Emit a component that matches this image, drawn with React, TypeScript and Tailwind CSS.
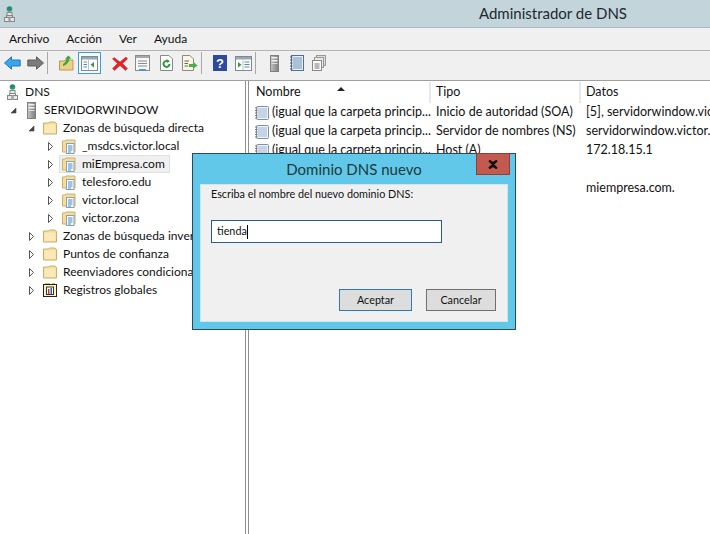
const ui = { fontFamily: 'Lato, "Open Sans", sans-serif' };

const Globe: React.FC = () => (
    <svg width="12" height="16" viewBox="0 0 12 16" className="shrink-0">
        <circle cx="5.5" cy="3" r="2.8" fill="#2c9a5a" />
        <path d="M3.5 2 L5.5 0.6 L7 2 L5 3.5 Z" fill="#2b6fc4" />
        <path d="M5.5 6 V9.5 M2.5 11 V9.5 H8.5 V11" stroke="#777" fill="none" />
        <rect x="3" y="6.5" width="5" height="3" fill="#e6e6e6" stroke="#888" />
        <rect x="0.5" y="11.5" width="4.5" height="4" fill="#e6e6e6" stroke="#888" />
        <rect x="6" y="11.5" width="4.5" height="4" fill="#e6e6e6" stroke="#888" />
    </svg>
);

const Server: React.FC = () => (
    <svg width="13" height="17" viewBox="-2 0 13 17" className="shrink-0">
        <defs>
            <linearGradient id="srv" x1="0" x2="1" y1="0" y2="0">
                <stop offset="0" stopColor="#c4c4c4" />
                <stop offset="1" stopColor="#7d7d7d" />
            </linearGradient>
        </defs>
        <rect x="0.5" y="0.5" width="8" height="16" fill="url(#srv)" stroke="#808080" />
        <rect x="1.5" y="2" width="6" height="1.5" fill="#f0f0f0" />
        <rect x="1.5" y="5" width="6" height="1.5" fill="#f0f0f0" />
        <rect x="1.5" y="8" width="6" height="1" fill="#dcdcdc" />
    </svg>
);

const Folder: React.FC = () => (
    <svg width="14" height="14" viewBox="0 0 14 14" className="shrink-0">
        <path d="M0.5 13 V2 H5.5 L6.5 1 H12 L13.5 2.5 V13 Z" fill="#f6dd97" stroke="#c9b070" />
        <rect x="1.5" y="3.5" width="11" height="8.5" fill="#fbeab8" />
    </svg>
);

const ZoneFolder: React.FC = () => (
    <svg width="14" height="15" viewBox="0 0 14 15" className="shrink-0">
        <path d="M0.5 13 V2 H3 L4 1 H13 V13 Z" fill="#f6dd97" stroke="#c9b070" />
        <rect x="4.5" y="4.5" width="7.5" height="10" fill="#fff" stroke="#8aa0b8" />
        <path d="M6 7 H10.5 M6 9 H10.5 M6 11 H10.5 M6 13 H9" stroke="#3f86c9" />
    </svg>
);

const GlobalLog: React.FC = () => (
    <svg width="14" height="14" viewBox="0 0 14 14" className="shrink-0">
        <rect x="0.5" y="1.5" width="13" height="12" fill="#fdf3c0" stroke="#222" />
        <path d="M2 0.5 H7 M9 0.5 H12" stroke="#d9b84a" />
        <rect x="3.5" y="4" width="7" height="7.5" fill="#fff" stroke="#333" />
        <rect x="5" y="6" width="1.5" height="5" fill="#c33" />
        <rect x="7.5" y="5" width="1.5" height="6" fill="#2b5fbd" />
    </svg>
);

const RecordIcon: React.FC = () => (
    <svg width="14" height="14" viewBox="0 0 14 14" className="shrink-0">
        <rect x="1.5" y="0.5" width="12" height="13" rx="1" fill="#eef3f9" stroke="#7f8fa3" />
        <path d="M3 3 H12 M3 5 H12 M3 7 H12 M3 9 H12 M3 11 H12" stroke="#9db5cf" />
        <path d="M0 2 H2.5 M0 4.5 H2.5 M0 7 H2.5 M0 9.5 H2.5 M0 12 H2.5" stroke="#777" />
    </svg>
);

const Arrow: React.FC<{ open?: boolean }> = ({ open }) => (
    <svg width="7" height="9" viewBox="0 0 7 9" className="shrink-0">
        {open ? <path d="M6 2 V7 H1 Z" fill="#444" stroke="#444" strokeWidth="0.6" /> : <path d="M1.5 0.5 L5.5 4.5 L1.5 8.5 Z" fill="#fff" stroke="#555" />}
    </svg>
);

const ToolBtn: React.FC<{ w: number; active?: boolean; children: React.ReactNode }> = ({ w, active, children }) => (
    <div style={{ width: w }} className={`h-[22px] flex items-center justify-center shrink-0 ${active ? "border border-[#3c9ee0] bg-[#f7fbfe]" : ""}`}>
        {children}
    </div>
);

const Sep: React.FC = () => <div className="w-px h-[22px] bg-[#a8a8a8] shrink-0" />;

const WinIcon: React.FC<{ flip?: boolean }> = ({ flip }) => (
    <svg width="17" height="15" viewBox="0 0 17 15">
        <rect x="0.5" y="0.5" width="16" height="14" fill="#fff" stroke="#7a8a99" />
        <rect x="1" y="1" width="15" height="2.5" fill="#9aa7b3" />
        {flip ? (
            <>
                <path d="M3 6 L6.5 8.8 L3 11.6 Z" fill="#2f9a3a" />
                <path d="M9.5 6 H14.5 M9.5 8.5 H14.5 M9.5 11 H14.5" stroke="#5c87b5" />
                <path d="M8 4 V14" stroke="#b8c2cc" />
            </>
        ) : (
            <>
                <path d="M2.5 6 H6 M2.5 8.5 H6 M2.5 11 H6" stroke="#5c87b5" />
                <path d="M7.5 4 V14" stroke="#b8c2cc" />
                <path d="M13 6 L9.5 8.8 L13 11.6 Z" fill="#2f9a3a" />
            </>
        )}
    </svg>
);

const Toolbar: React.FC = () => (
    <div className="h-[29px] flex items-start pt-[1px] pl-[2px] bg-[#f0f0f0]">
        <ToolBtn w={21}>
            <svg width="17" height="14" viewBox="0 0 17 14">
                <path d="M0.5 7 L7.5 0.8 V4 H16.2 V10 H7.5 V13.2 Z" fill="#3aa5ea" stroke="#1f78c0" />
            </svg>
        </ToolBtn>
        <ToolBtn w={24}>
            <svg width="17" height="14" viewBox="0 0 17 14">
                <path d="M16.5 7 L9.5 0.8 V4 H0.8 V10 H9.5 V13.2 Z" fill="#7b7b7b" stroke="#5f5f5f" />
            </svg>
        </ToolBtn>
        <Sep />
        <div className="w-[8px] shrink-0" />
        <ToolBtn w={20}>
            <svg width="15" height="16" viewBox="0 0 15 16">
                <path d="M0.5 15 V6 H5 L6 5 H14 V15 Z" fill="#ecd08a" stroke="#b99a55" />
                <path d="M4 9 C6 8 7 6 7.5 3.5 L6 3.5 L9.5 0.5 L12.5 3.5 L10.5 3.5 C10 7 8 10 4 11 Z" fill="#3ea83e" />
            </svg>
        </ToolBtn>
        <div className="w-[2px] shrink-0" />
        <ToolBtn w={23} active>
            <WinIcon />
        </ToolBtn>
        <div className="w-[7px] shrink-0" />
        <ToolBtn w={24}>
            <svg width="16" height="15" viewBox="0 0 16 15">
                <path d="M2 1.5 L8 6 L14 1 L15.5 3 L10.5 7.5 L15.5 12.5 L13.5 14.5 L8 9.5 L2.5 14.5 L0.5 12.5 L5.5 7.5 L0.5 3 Z" fill="#e0242b" stroke="#b81c20" strokeWidth="0.5" />
            </svg>
        </ToolBtn>
        <ToolBtn w={21}>
            <svg width="15" height="16" viewBox="0 0 15 16">
                <rect x="0.5" y="0.5" width="14" height="15" fill="#f7f7f7" stroke="#8a8a8a" />
                <rect x="1" y="1" width="13" height="2" fill="#a8a8a8" />
                <path d="M3 6 H12 M3 8.5 H12 M3 11 H12" stroke="#8a8a8a" />
                <rect x="4" y="14" width="7" height="1.5" fill="#3c9ee0" />
            </svg>
        </ToolBtn>
        <ToolBtn w={27}>
            <svg width="13" height="16" viewBox="0 0 13 16">
                <path d="M0.5 0.5 H9 L12.5 4 V15.5 H0.5 Z" fill="#fff" stroke="#8a8a8a" />
                <path d="M9.5 9 A3 3 0 1 1 8 6.3" fill="none" stroke="#2f9a3a" strokeWidth="2" />
                <path d="M6.5 4 L10 6.3 L7 8 Z" fill="#2f9a3a" />
            </svg>
        </ToolBtn>
        <ToolBtn w={19}>
            <svg width="16" height="16" viewBox="0 0 16 16">
                <path d="M0.5 0.5 H8 L11.5 4 V15.5 H0.5 Z" fill="#fbf6dd" stroke="#8a8a8a" />
                <path d="M2.5 6 H7 M2.5 8.5 H6 M2.5 11 H6" stroke="#666" />
                <path d="M7 9 H11 V6.5 L15.5 10.5 L11 14 V12 H7 Z" fill="#49b04a" />
            </svg>
        </ToolBtn>
        <div className="w-[2px] shrink-0" />
        <Sep />
        <div className="w-[6px] shrink-0" />
        <ToolBtn w={23}>
            <svg width="14" height="16" viewBox="0 0 14 16">
                <rect width="14" height="16" fill="#2c4a9e" />
                <text x="7" y="13" textAnchor="middle" fontSize="13" fontWeight="700" fill="#fff" fontFamily="Liberation Sans">?</text>
            </svg>
        </ToolBtn>
        <ToolBtn w={24}>
            <WinIcon flip />
        </ToolBtn>
        <Sep />
        <div className="w-[7px] shrink-0" />
        <ToolBtn w={22}>
            <Server />
        </ToolBtn>
        <ToolBtn w={24}>
            <svg width="14" height="16" viewBox="0 0 14 16">
                <rect x="1.5" y="0.5" width="12" height="15" fill="#e8f0f8" stroke="#4f6ea8" />
                <path d="M3 3 H12 M3 5 H12 M3 7 H12 M3 9 H12 M3 11 H12 M3 13 H12" stroke="#6d92c0" />
                <path d="M0 2 H2.5 M0 5 H2.5 M0 8 H2.5 M0 11 H2.5 M0 14 H2.5" stroke="#555" />
            </svg>
        </ToolBtn>
        <ToolBtn w={20}>
            <svg width="14" height="16" viewBox="0 0 14 16">
                <rect x="4.5" y="0.5" width="9" height="10" fill="#ddd" stroke="#999" />
                <rect x="2.5" y="2.5" width="9" height="10" fill="#e8e8e8" stroke="#999" />
                <rect x="0.5" y="5.5" width="9" height="10" fill="#fafafa" stroke="#888" />
                <path d="M2.5 9 H7.5 M2.5 11 H7.5 M2.5 13 H7.5" stroke="#777" />
            </svg>
        </ToolBtn>
    </div>
);

const TreeRow: React.FC<{ indent: string; arrow?: "open" | "closed"; icon: React.ReactNode; label: string; selected?: boolean }> = ({ indent, arrow, icon, label, selected }) => (
    <div className={`h-[18px] flex items-center whitespace-nowrap ${indent}`}>
        {arrow && <div className="w-[12px] shrink-0 flex justify-start"><Arrow open={arrow === "open"} /></div>}
        <div className={`flex items-center h-[18px] pl-[2px] pr-[4px] gap-[6px] border ${selected ? "bg-[#f0f0f0] border-[#e0e0e0]" : "border-transparent"}`}>
            {icon}
            <span>{label}</span>
        </div>
    </div>
);

const TreePane: React.FC = () => (
    <div className="w-[245px] shrink-0 overflow-hidden bg-white pt-[2px] text-[12px] text-[#111]">
        <TreeRow indent="pl-[4px]" icon={<Globe />} label="DNS" />
        <TreeRow indent="pl-[10px]" arrow="open" icon={<Server />} label="SERVIDORWINDOW" />
        <TreeRow indent="pl-[28px]" arrow="open" icon={<Folder />} label="Zonas de búsqueda directa" />
        <TreeRow indent="pl-[47px]" arrow="closed" icon={<ZoneFolder />} label="_msdcs.victor.local" />
        <TreeRow indent="pl-[47px]" arrow="closed" icon={<ZoneFolder />} label="miEmpresa.com" selected />
        <TreeRow indent="pl-[47px]" arrow="closed" icon={<ZoneFolder />} label="telesforo.edu" />
        <TreeRow indent="pl-[47px]" arrow="closed" icon={<ZoneFolder />} label="victor.local" />
        <TreeRow indent="pl-[47px]" arrow="closed" icon={<ZoneFolder />} label="victor.zona" />
        <TreeRow indent="pl-[28px]" arrow="closed" icon={<Folder />} label="Zonas de búsqueda inversa" />
        <TreeRow indent="pl-[28px]" arrow="closed" icon={<Folder />} label="Puntos de confianza" />
        <TreeRow indent="pl-[28px]" arrow="closed" icon={<Folder />} label="Reenviadores condicionales" />
        <TreeRow indent="pl-[28px]" arrow="closed" icon={<GlobalLog />} label="Registros globales" />
    </div>
);

const ROWS = [
    { nombre: "(igual que la carpeta princip...", tipo: "Inicio de autoridad (SOA)", datos: "[5], servidorwindow.victor.local." },
    { nombre: "(igual que la carpeta princip...", tipo: "Servidor de nombres (NS)", datos: "servidorwindow.victor.local." },
    { nombre: "(igual que la carpeta princip...", tipo: "Host (A)", datos: "172.18.15.1" },
    { nombre: "", tipo: "", datos: "" },
    { nombre: "", tipo: "", datos: "miempresa.com." },
];

const ListPane: React.FC = () => (
    <div className="flex-1 min-w-0 overflow-hidden bg-white pl-[1px] pt-[1px] text-[12.5px] text-[#111]">
        <div className="relative h-[21px] flex items-center whitespace-nowrap">
            <div className="w-[181px] h-full pl-[6px] flex items-center border-r-2 border-[#e8e8e8] shrink-0">Nombre</div>
            <div className="w-[150px] h-full pl-[5px] flex items-center border-r-2 border-[#e8e8e8] shrink-0">Tipo</div>
            <div className="flex-1 h-full pl-[5px] flex items-center">Datos</div>
            <svg width="8" height="4" viewBox="0 0 8 4" className="absolute left-[87px] top-[5px]">
                <path d="M0 4 L4 0 L8 4 Z" fill="#222" />
            </svg>
        </div>
        {ROWS.map((row, i) => (
            <div key={i} className="h-[19px] flex items-center whitespace-nowrap">
                <div className="w-[181px] pl-[5px] flex items-center gap-[3px] shrink-0">
                    {row.nombre && <RecordIcon />}
                    <span>{row.nombre}</span>
                </div>
                <div className="w-[150px] pl-[5px] shrink-0">{row.tipo}</div>
                <div className="flex-1 pl-[5px]">{row.datos}</div>
            </div>
        ))}
    </div>
);

const Dialog: React.FC = () => (
    <div className="absolute left-[192px] top-[153px] w-[324px] h-[177px] border border-[#2c4a5c] bg-[#62c8ea] flex flex-col px-[7px] pb-[7px]">
        <div className="relative h-[30px] shrink-0 flex items-center justify-center text-[15px] text-[#1c3a3a]">
            Dominio DNS nuevo
            <div className="absolute right-[-2px] top-[-1px] w-[34px] h-[22px] bg-[#c25a50] border border-[#8c4038] flex items-center justify-center">
                <svg width="10" height="9" viewBox="0 0 10 9">
                    <path d="M1 0.5 L5 3.2 L9 0.5 M1 8.5 L5 5.8 L9 8.5 M1 0.5 L9 8.5 M9 0.5 L1 8.5" stroke="#111" strokeWidth="2" fill="none" />
                </svg>
            </div>
        </div>
        <div className="flex-1 bg-[#f0f0f0] border border-[#d5e4ea] pl-[10px] pr-[11px] flex flex-col text-[10.8px] text-[#111]">
            <div className="mt-[2px] h-[14px] leading-[14px]">Escriba el nombre del nuevo dominio DNS:</div>
            <div className="mt-[19px] w-[231px] h-[23px] bg-white border border-[#2a5c88] pl-[5px] flex items-center">
                tienda<span className="w-px h-[14px] bg-black" />
            </div>
            <div className="flex justify-end gap-[14px] mt-[46px]">
                <div className="w-[73px] h-[22px] bg-[#dddddd] border border-[#2f7ab5] flex items-center justify-center">Aceptar</div>
                <div className="w-[70px] h-[22px] bg-[#dddddd] border border-[#707070] flex items-center justify-center">Cancelar</div>
            </div>
        </div>
    </div>
);

export default function App() {
    return (
        <div className="relative w-[710px] h-[534px] overflow-hidden bg-white flex flex-col" style={ui}>
            <div className="h-[28px] shrink-0 bg-[#c3d4da] border-b border-[#a9b9c0] flex items-center justify-between pl-[4px]">
                <Globe />
                <span className="mr-[83px] text-[15px] text-[#1c2a30]">Administrador de DNS</span>
            </div>
            <div className="h-[23px] shrink-0 bg-[#f0f0f0] border-b border-[#b4b4b4] flex items-center pl-[9px] gap-[17px] text-[12px] text-[#111]">
                <span>Archivo</span>
                <span>Acción</span>
                <span>Ver</span>
                <span>Ayuda</span>
            </div>
            <Toolbar />
            <div className="flex-1 flex min-h-0 border-t border-[#a0a0a0]">
                <TreePane />
                <div className="w-[4px] shrink-0 border-x border-[#909090] bg-white" />
                <ListPane />
            </div>
            <Dialog />
        </div>
    );
}
